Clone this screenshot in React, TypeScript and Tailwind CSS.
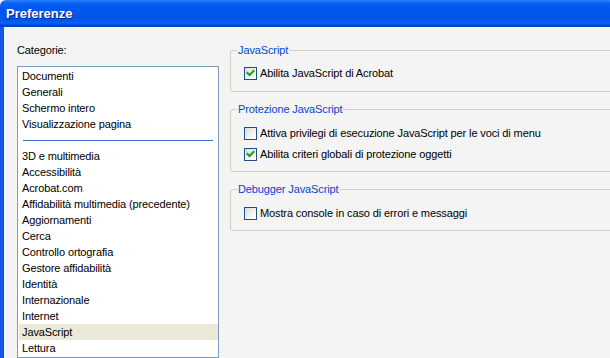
import React from "react"

const topCategories = ["Documenti", "Generali", "Schermo intero", "Visualizzazione pagina"]

const otherCategories = [
  "3D e multimedia",
  "Accessibilità",
  "Acrobat.com",
  "Affidabilità multimedia (precedente)",
  "Aggiornamenti",
  "Cerca",
  "Controllo ortografia",
  "Gestore affidabilità",
  "Identità",
  "Internazionale",
  "Internet",
  "JavaScript",
  "Lettura",
]

function CheckBox({ checked }: { checked: boolean }) {
  return (
    <div className="w-[13px] h-[13px] shrink-0 border border-[#1c5180] bg-[linear-gradient(135deg,#dcdcd7_0%,#f4f4f0_60%,#ffffff_100%)] flex items-center justify-center">
      {checked && (
        <svg width="9" height="9" viewBox="0 0 9 9">
          <path d="M1.5 4 L3.5 6 L7.5 2" stroke="#21a121" strokeWidth="2.2" fill="none" strokeLinecap="square" />
        </svg>
      )}
    </div>
  )
}

function CheckRow({ label, checked }: { label: string; checked: boolean }) {
  return (
    <div className="flex items-center h-[13px] gap-[3px] ml-[7px]">
      <CheckBox checked={checked} />
      <span className="leading-[13px] whitespace-nowrap">{label}</span>
    </div>
  )
}

function Group({ title, children, className = "" }: { title: string; children: React.ReactNode; className?: string }) {
  return (
    <fieldset className={`w-[420px] border border-[#d0d0bf] rounded-[3px] px-[6px] ${className}`}>
      <legend className="px-[1px] text-[#0046d5] leading-[16px]">{title}</legend>
      {children}
    </fieldset>
  )
}

export default function App() {
  return (
    <div
      className="w-[610px] h-[358px] overflow-hidden flex flex-col bg-[#f4f4f4] text-[11px] tracking-[-0.12px] text-black"
      style={{ fontFamily: '"Liberation Sans", Arial, sans-serif' }}
    >
      {/* Title bar */}
      <div className="h-[27px] shrink-0 flex items-center pl-[6px] rounded-tl-[6px] bg-[linear-gradient(to_bottom,#2a86ff_0px,#0a62f5_3px,#0058ee_8px,#0055ea_20px,#0a5ff7_23px,#0046d8_25px,#003bc4_27px)]">
        <span className="text-white font-bold text-[13px] tracking-normal leading-none [text-shadow:1px_1px_0_#0a1e8c]">Preferenze</span>
      </div>

      <div className="flex-1 flex min-h-0">
        {/* window frame */}
        <div className="w-[4px] shrink-0 bg-[linear-gradient(to_right,#0831d9_0px,#1c6cf0_1px,#0a5ae8_2px,#0851e0_4px)]" />

        <div className="flex-1 flex pl-[13px] pt-[15px] min-w-0">
          {/* Categories */}
          <div className="w-[202px] shrink-0 flex flex-col">
            <div className="h-[16px] leading-[16px] mb-[8px]">Categorie:</div>
            <div className="h-[400px] border border-[#7f9db9] bg-white pt-[1px]">
              {topCategories.map((c) => (
                <div key={c} className="h-[16px] leading-[16px] pl-[4px] whitespace-nowrap">
                  {c}
                </div>
              ))}
              <div className="h-[16px] flex items-center px-[5px]">
                <div className="h-[1px] w-full bg-[#3a72d6]" />
              </div>
              {otherCategories.map((c) => (
                <div
                  key={c}
                  className={`h-[16px] leading-[16px] whitespace-nowrap ${
                    c === "JavaScript" ? "ml-[1px] pl-[3px] bg-[#ece9d8]" : "pl-[4px]"
                  }`}
                >
                  {c}
                </div>
              ))}
            </div>
          </div>

          {/* Settings */}
          <div className="ml-[11px] flex flex-col">
            <Group title="JavaScript" className="pt-[9px] pb-[11px]">
              <CheckRow label="Abilita JavaScript di Acrobat" checked />
            </Group>
            <Group title="Protezione JavaScript" className="mt-[9px] pt-[10px] pb-[10px]">
              <div className="flex flex-col gap-[8px]">
                <CheckRow label="Attiva privilegi di esecuzione JavaScript per le voci di menu" checked={false} />
                <CheckRow label="Abilita criteri globali di protezione oggetti" checked />
              </div>
            </Group>
            <Group title="Debugger JavaScript" className="mt-[9px] pt-[10px] pb-[10px]">
              <CheckRow label="Mostra console in caso di errori e messaggi" checked={false} />
            </Group>
          </div>
        </div>
      </div>
    </div>
  )
}
